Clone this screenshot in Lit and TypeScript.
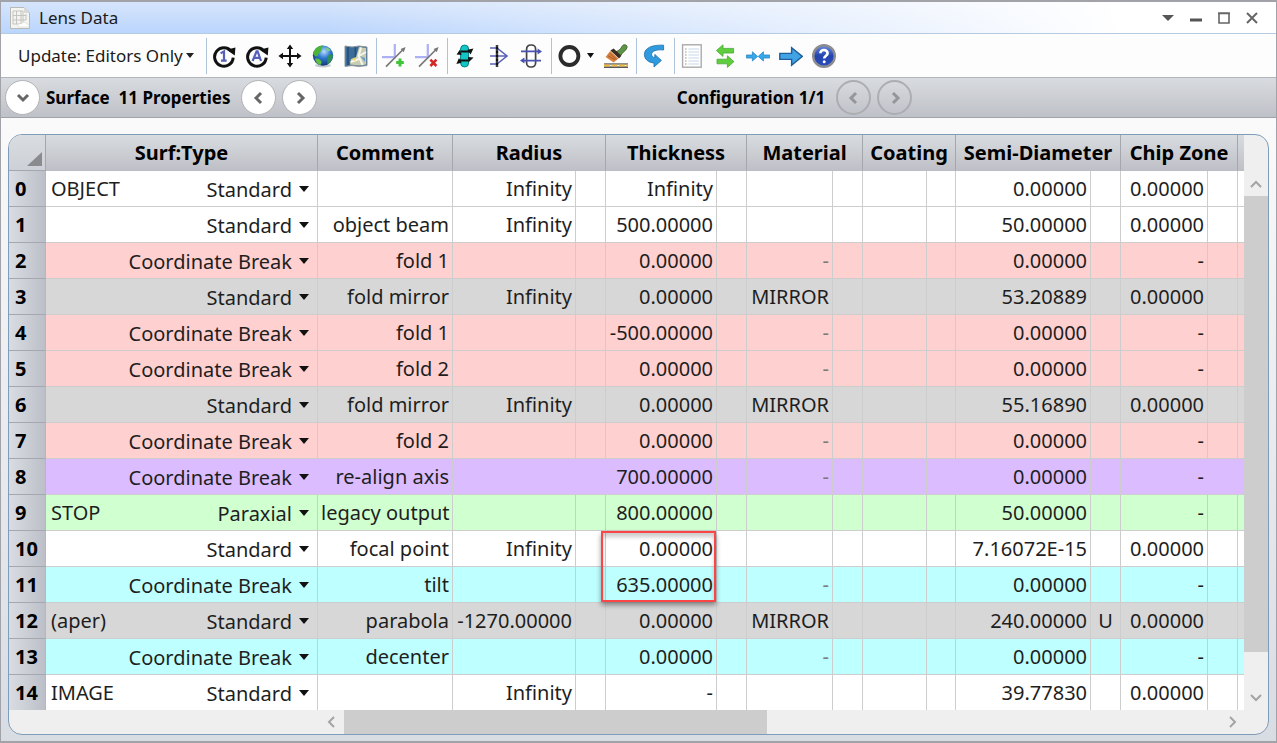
import { LitElement, html, svg, css, nothing } from "lit";
import { customElement, property } from "lit/decorators.js";

interface Row {
  tag?: string;
  type: string;
  comment?: string;
  radius?: string;
  thick: string;
  material?: string;
  semi: string;
  flag?: string;
  chip: string;
  tone?: string;
}

const Z = "0.00000";
const STD = "Standard";
const CB = "Coordinate Break";

const rows: Row[] = [
  { tag: "OBJECT", type: STD, radius: "Infinity", thick: "Infinity", semi: Z, chip: Z },
  { type: STD, comment: "object beam", radius: "Infinity", thick: "500.00000", semi: "50.00000", chip: Z },
  { type: CB, comment: "fold 1", thick: Z, material: "-", semi: Z, chip: "-", tone: "pink" },
  { type: STD, comment: "fold mirror", radius: "Infinity", thick: Z, material: "MIRROR", semi: "53.20889", chip: Z, tone: "gray" },
  { type: CB, comment: "fold 1", thick: "-500.00000", material: "-", semi: Z, chip: "-", tone: "pink" },
  { type: CB, comment: "fold 2", thick: Z, material: "-", semi: Z, chip: "-", tone: "pink" },
  { type: STD, comment: "fold mirror", radius: "Infinity", thick: Z, material: "MIRROR", semi: "55.16890", chip: Z, tone: "gray" },
  { type: CB, comment: "fold 2", thick: Z, material: "-", semi: Z, chip: "-", tone: "pink" },
  { type: CB, comment: "re-align axis", thick: "700.00000", material: "-", semi: Z, chip: "-", tone: "purple" },
  { tag: "STOP", type: "Paraxial", comment: "legacy output", thick: "800.00000", semi: "50.00000", chip: "-", tone: "green" },
  { type: STD, comment: "focal point", radius: "Infinity", thick: Z, semi: "7.16072E-15", chip: Z },
  { type: CB, comment: "tilt", thick: "635.00000", material: "-", semi: Z, chip: "-", tone: "cyan" },
  { tag: "(aper)", type: STD, comment: "parabola", radius: "-1270.00000", thick: Z, material: "MIRROR", semi: "240.00000", flag: "U", chip: Z, tone: "gray" },
  { type: CB, comment: "decenter", thick: Z, material: "-", semi: Z, chip: "-", tone: "cyan" },
  { tag: "IMAGE", type: STD, radius: "Infinity", thick: "-", semi: "39.77830", chip: Z },
];

const refreshArc = svg`
  <path d="M19.4 7.4A9.3 9.3 0 1 0 21.2 13.6" fill="none" stroke="#111" stroke-width="3"/>
  <path d="M14.6 5.8 23.4 3.4 22.8 11.4Z" fill="#111"/>`;

const icons: Record<string, unknown> = {
  updateOne: svg`${refreshArc}
    <path d="M8.6 9.4 12 7.4V16.4M9 16.6H14.6" fill="none" stroke="#5560b8" stroke-width="2.2"/>`,
  updateAll: svg`${refreshArc}
    <path d="M7.6 17 11.6 7.4H12.6L16 17M9.2 13.8H14.8" fill="none" stroke="#5560b8" stroke-width="2.2"/>`,
  move: svg`
    <path d="M12 3V21M3 12H21" stroke="#111" stroke-width="2"/>
    <path d="M12 .4 15.2 5H8.8ZM12 23.6 15.2 19H8.8ZM.4 12 5 8.8V15.2ZM23.6 12 19 8.8V15.2Z" fill="#111"/>`,
  globe: svg`
    <defs><radialGradient id="sea" cx=".55" cy=".3" r=".8">
      <stop offset="0" stop-color="#b9dcff"/><stop offset=".4" stop-color="#2f7ad0"/><stop offset="1" stop-color="#0b2460"/>
    </radialGradient></defs>
    <ellipse cx="12" cy="21.6" rx="8" ry="1.8" fill="#9aa" opacity=".6"/>
    <circle cx="12" cy="11.6" r="10.2" fill="url(#sea)"/>
    <path d="M2.2 9C4 4 8 1.6 11.6 1.6 12 3 10 5 10 7 9 9 7 9 6.6 12 5 13 3 12 2.2 9Z" fill="#4db43a"/>
    <path d="M17 12C18 10 21 10 22 11.6 22 15 19 19.6 16.4 20.4 17 17 15.4 15 17 12Z" fill="#2f8f58"/>
    <path d="M4 14.6C7 13.8 10 15.6 10.6 18 10.6 20 9.6 20.8 8.6 21 6 19.8 4.4 17.6 4 14.6Z" fill="#5ec040"/>
    <path d="M14.6 3.4C17 3.6 18.6 5 19.6 6.6L16.4 7.4Z" fill="#7fd07a"/>`,
  map: svg`
    <path d="M1 2 8 3 15 2 23 3V21.6L15 22.4 8 21.6 1 22.4Z" fill="#3b6d98" stroke="#8d9499"/>
    <path d="M4 3V21M11.4 3.4V21" stroke="#264f78" stroke-width="1.6"/>
    <path d="M7 15 12 13 15 3 22 4V20.6L15 21.6 6 20.6Z" fill="#c9ccae"/>
    <path d="M17 3.4 14.6 12 18.6 21M15 12 22 8M6.6 18 15 15" stroke="#f5f6f0" stroke-width="2" fill="none"/>
    <path d="M16 12 21 14V18Z" fill="#6aa0c8"/><path d="M8 15 12 14 11 17Z" fill="#f0d84c"/>`,
  axesAdd: svg`
    <path d="M12.8 0V13.2H0" fill="none" stroke="#aeb0f4" stroke-width="2.2"/>
    <path d="M4 22.6 21.6 5" stroke="#777" stroke-width="1.6"/><path d="M23.6 3 21.8 8.2 18.6 5Z" fill="#777"/>
    <path d="M18 14.6V22.4M14.2 18.5H21.8" stroke="#3fc43a" stroke-width="3"/>`,
  axesRemove: svg`
    <path d="M12.8 0V13.2H0" fill="none" stroke="#aeb0f4" stroke-width="2.2"/>
    <path d="M4 22.6 21.6 5" stroke="#777" stroke-width="1.6"/><path d="M23.6 3 21.8 8.2 18.6 5Z" fill="#777"/>
    <path d="M15.4 15.6 21.4 22M21.4 15.6 15.4 22" stroke="#d32828" stroke-width="2.6"/>`,
  lens: svg`
    <rect x="7.6" y="1" width="8" height="22" rx="4" fill="#12c6c6" stroke="#0a7d80"/>
    <path d="M8 7.6H18M5.6 16.4H15" stroke="#111" stroke-width="2"/>
    <path d="M3.6 10.4 7 5.6 8.6 11ZM20.6 13.6 15.4 18.4 15 13ZM14.4 5.8 20.4 4.6 17.6 10.4ZM8.6 18.8 3.4 20 6 14Z" fill="#111"/>`,
  focus: svg`
    <path d="M4 4H11L21 12 11 20H4M4 12H21" fill="none" stroke="#5a62b8" stroke-width="1.6"/>
    <path d="M11 1V23" stroke="#111" stroke-width="2.4"/><path d="M11 1V23" stroke="#778" stroke-width=".8" stroke-dasharray="2 2"/>`,
  collimate: svg`
    <rect x="7.6" y="1" width="9" height="22" rx="4" fill="none" stroke="#444" stroke-width="1.7"/>
    <path d="M2 7.4H20M4 16.6H22" stroke="#4852b4" stroke-width="1.8"/>
    <path d="M18.6 4.4 23 7.4 18.6 10.4ZM5.4 13.6 1 16.6 5.4 19.6Z" fill="#4852b4"/>`,
  ring: svg`<circle cx="12.4" cy="12" r="9" fill="none" stroke="#2b2b2b" stroke-width="3.8"/>`,
  brush: svg`
    <path d="M12 7.6C14 7 16.6 5.4 18 2.4 19.4-.4 23.6.6 23 3.4 22.4 6.4 18.6 8 16.6 11.6Z" fill="#5f9448" stroke="#3f6b34"/>
    <path d="M6.4 6.4 9.6 4.4 17.4 11.8 15 14.4Z" fill="#3c2c24"/>
    <path d="M6.2 7 14.4 14.6 9.6 18.6 1.6 13Z" fill="#d9813c"/><path d="M4 11.8 10.6 15.6M6 9.4 12.6 16" stroke="#a85a2c"/>
    <path d="M0 20H24M0 23.2H24" stroke="#222" stroke-width="1.2"/><path d="M0 21.6H24" stroke="#edb93c" stroke-width="2" stroke-dasharray="6 1.4"/>`,
  undo: svg`
    <path d="M21.6 1.2V6C15 5.2 9.4 7 9.6 10.4 9.8 12.4 11 13.4 12.8 13.6V10.4L19.4 16.4 12 23V19C6 18.4 2.4 15 2.4 10.4 2.4 4 10 .6 21.6 1.2Z" fill="#2f9ade" stroke="#1a6ea8" stroke-width=".8"/>`,
  sheet: svg`
    <rect x="2.6" y=".8" width="18.6" height="22.4" fill="#fff" stroke="#aaa" stroke-width="1.4"/>
    <path d="M8.4 5H19M8.4 8H19M8.4 11H19M8.4 14H19M8.4 17H19M8.4 20H19" stroke="#c6d7e8" stroke-width="1.1"/>
    <path d="M5 5H6.6M5 8H6.6M5 11H6.6M5 14H6.6M5 17H6.6M5 20H6.6" stroke="#999" stroke-width="1.1"/>`,
  swap: svg`
    <path d="M3.4 6.6 10 .8V4.4H20.6V9H10V12.4Z" fill="#5fce3e" stroke="#4aa834" stroke-width=".8"/>
    <path d="M21 17.6 14.4 11.8V15.2H4V19.8H14.4V23.4Z" fill="#5fce3e" stroke="#4aa834" stroke-width=".8"/>`,
  converge: svg`
    <path d="M11.6 12.4 6.4 7.8V11H.4V14H6.4V17ZM12.2 12.4 17.4 7.8V11H23.6V14H17.4V17Z" fill="#38a8ec" stroke="#2a86c4" stroke-width=".8"/>`,
  right: svg`<path d="M.8 9.4H12.6V3.6L23.4 12.4 12.6 21.2V15.4H.8Z" fill="#41a2e4" stroke="#1d5f9c" stroke-width="1.4"/>`,
  help: svg`
    <defs><linearGradient id="ball" x1="0" y1="0" x2="0" y2="1"><stop offset="0" stop-color="#6a8de0"/><stop offset=".5" stop-color="#2443ac"/><stop offset="1" stop-color="#2c4fc0"/></linearGradient></defs>
    <circle cx="12" cy="12" r="10.8" fill="url(#ball)" stroke="#8b8b90" stroke-width="2.4"/>
    <path d="M8.4 9.2C8.4 4.8 15.8 5 15.6 9.4 15.5 11.8 12.2 11.8 12.2 14.6" fill="none" stroke="#fff" stroke-width="2.6"/><circle cx="12.2" cy="17.8" r="1.5" fill="#fff"/>`,
};

const chevrons: Record<string, string> = {
  down: "M3 5 8 10 13 5",
  up: "M3 11 8 6 13 11",
  left: "M10 3 5 8 10 13",
  right: "M6 3 11 8 6 13",
};

@customElement("app-icon")
export class AppIcon extends LitElement {
  @property() name = "";
  static styles = css`
    :host { display: block; width: 24px; height: 24px; }
    svg { display: block; width: 24px; height: 24px; }
  `;
  render() {
    return html`<svg viewBox="0 0 24 24" aria-hidden="true">${icons[this.name]}</svg>`;
  }
}

@customElement("app-chevron")
export class AppChevron extends LitElement {
  @property() dir = "down";
  @property({ type: Number }) weight = 3;
  static styles = css`
    :host { display: block; width: 16px; height: 16px; }
    svg { display: block; }
  `;
  render() {
    return html`<svg width="16" height="16" viewBox="0 0 16 16" aria-hidden="true">
      <path d=${chevrons[this.dir]} fill="none" stroke="currentColor" stroke-width=${this.weight} />
    </svg>`;
  }
}

@customElement("lens-grid")
export class LensGrid extends LitElement {
  static styles = css`
    :host {
      display: grid;
      grid-template-columns: minmax(0, 1fr) 24px;
      grid-template-rows: auto 24px;
      overflow: hidden;
      border: 1px solid #7f9db9;
      border-radius: 14px;
      background: #efefef;
      color: #1e1e1e;
      font-size: 20px;
    }
    .view { overflow: hidden; }
    table {
      width: 100%;
      table-layout: fixed;
      border-collapse: separate;
      border-spacing: 0;
      line-height: 35px;
      white-space: nowrap;
    }
    .c-num { width: 37px; }
    .c-type { width: 272px; }
    .c-comment { width: 135px; }
    .c-radius { width: 123px; }
    .c-solve { width: 30px; }
    .c-thick { width: 111px; }
    .c-mat { width: 86px; }
    .c-coat { width: 64px; }
    .c-coat-solve { width: 29px; }
    .c-semi { width: 135px; }
    .c-chip { width: 87px; }
    th, td {
      box-sizing: border-box;
      height: 36px;
      padding: 0 3px;
      border-right: 1px solid #cdcdcd;
      border-bottom: 1px solid #cdcdcd;
      text-align: right;
      vertical-align: middle;
    }
    th { color: #000; font-weight: 700; }
    thead th {
      padding: 0;
      border-right-color: #a4a8ae;
      border-bottom-color: #bcbdc4;
      background: linear-gradient(#d8dcdf, #bfc0c7);
      text-align: center;
    }
    tbody th {
      padding: 0 0 0 6px;
      border-right-color: #b4b7be;
      border-bottom-color: #a4a8ae;
      background: linear-gradient(90deg, #d9dde3, #bcbfc7);
      text-align: left;
    }
    thead .corner {
      padding: 0 3px 4px 0;
      border-bottom-color: #a4a8ae;
      background: linear-gradient(#d9dde1, #cdd0d6);
      text-align: right;
      vertical-align: bottom;
    }
    .corner svg { display: block; margin-left: auto; }
    th:last-child, td:last-child { border-right: 0; }
    tbody tr:last-child > * { height: 35px; border-bottom: 0; }
    td { background: var(--tone, #fff); }
    .pink { --tone: #ffd0d0; }
    .gray { --tone: #d7d7d7; }
    .purple { --tone: #dbbcff; }
    .green { --tone: #d0ffd0; }
    .cyan { --tone: #beffff; }
    .dim { color: #7a7a7a; }
    .flag { text-align: center; }
    .surface { display: flex; align-items: center; padding-left: 2px; }
    .pick { display: flex; flex: 1; align-items: center; }
    select {
      box-sizing: border-box;
      flex: 1;
      min-width: 0;
      height: 34px;
      margin: 0;
      padding: 0 0 2px;
      border: 0;
      outline: 0;
      appearance: none;
      background: transparent;
      color: inherit;
      font: inherit;
      text-align: right;
      text-align-last: right;
    }
    .caret { flex: none; margin: 0 5px 0 7px; }
    .marked { position: relative; }
    .mark {
      position: absolute;
      z-index: 1;
      top: 0;
      right: 0;
      left: -5px;
      height: 67px;
      border: 2px solid #fa4646;
      box-shadow: 0 3px 5px #0006, inset 0 4px 4px #0003;
      pointer-events: none;
    }
    .bar { display: flex; align-items: center; }
    .bar button {
      display: grid;
      place-items: center;
      width: 24px;
      height: 24px;
      padding: 0;
      border: 0;
      background: transparent;
      color: #a4a4a4;
    }
    .vbar { flex-direction: column; padding-top: 37px; }
    .vtrack { display: flex; flex: 1; flex-direction: column; align-self: stretch; }
    .htrack { display: flex; flex: 1; align-self: stretch; }
    .vthumb { flex: 455; background: #cdcdcd; }
    .vrest { flex: 34; }
    .hthumb { flex: 423; background: #cdcdcd; }
    .hrest { flex: 452; }
    .hbar { padding-left: 311px; }
  `;

  row(r: Row, i: number) {
    return html`<tr class=${r.tone ?? "plain"}>
      <th scope="row">${i}</th>
      <td>
        <div class="surface">
          <span>${r.tag ?? nothing}</span>
          <label class="pick">
            <select aria-label="Surface ${i} type"><option>${r.type}</option></select>
            <svg class="caret" width="10" height="6" viewBox="0 0 10 6" aria-hidden="true"><path d="M0 0H10L5 6Z" fill="#111" /></svg>
          </label>
        </div>
      </td>
      <td>${r.comment}</td>
      <td>${r.radius}</td>
      <td></td>
      <td class=${i === 10 ? "marked" : "value"}>${r.thick}${i === 10 ? html`<div class="mark"></div>` : nothing}</td>
      <td></td>
      <td class=${r.material === "-" ? "dim" : "value"}>${r.material}</td>
      <td></td>
      <td></td>
      <td></td>
      <td>${r.semi}</td>
      <td class="flag">${r.flag}</td>
      <td>${r.chip}</td>
      <td></td>
      <td></td>
    </tr>`;
  }

  render() {
    return html`
      <div class="view">
        <table>
          <colgroup>
            <col class="c-num" /><col class="c-type" /><col class="c-comment" />
            <col class="c-radius" /><col class="c-solve" />
            <col class="c-thick" /><col class="c-solve" />
            <col class="c-mat" /><col class="c-solve" />
            <col class="c-coat" /><col class="c-coat-solve" />
            <col class="c-semi" /><col class="c-solve" />
            <col class="c-chip" /><col class="c-solve" />
            <col />
          </colgroup>
          <thead>
            <tr>
              <th class="corner" aria-label="Select all">
                <svg width="15" height="14" viewBox="0 0 15 14" aria-hidden="true"><path d="M15 0V14H0Z" fill="#8a8b8e" /></svg>
              </th>
              <th scope="col">Surf:Type</th>
              <th scope="col">Comment</th>
              <th scope="col" colspan="2">Radius</th>
              <th scope="col" colspan="2">Thickness</th>
              <th scope="col" colspan="2">Material</th>
              <th scope="col" colspan="2">Coating</th>
              <th scope="col" colspan="2">Semi-Diameter</th>
              <th scope="col" colspan="2">Chip Zone</th>
              <th></th>
            </tr>
          </thead>
          <tbody>${rows.map((r, i) => this.row(r, i))}</tbody>
        </table>
      </div>
      <div class="bar vbar">
        <button aria-label="Scroll up"><app-chevron dir="up" weight="2"></app-chevron></button>
        <div class="vtrack"><div class="vthumb"></div><div class="vrest"></div></div>
        <button aria-label="Scroll down"><app-chevron dir="down" weight="2"></app-chevron></button>
      </div>
      <div class="bar hbar">
        <button aria-label="Scroll left"><app-chevron dir="left" weight="2"></app-chevron></button>
        <div class="htrack"><div class="hthumb"></div><div class="hrest"></div></div>
        <button aria-label="Scroll right"><app-chevron dir="right" weight="2"></app-chevron></button>
      </div>
      <div></div>
    `;
  }
}

@customElement("app-root")
export class AppRoot extends LitElement {
  static styles = css`
    :host {
      display: flex;
      flex-direction: column;
      box-sizing: border-box;
      min-height: 100vh;
      border: 1px solid #a2a3a8;
      border-top-width: 2px;
      border-bottom-width: 2px;
      background: linear-gradient(#fafafa 120px, #d8dce3);
      color: #1a1a1a;
      font-family: "Noto Sans", "Open Sans", sans-serif;
      font-size: 17px;
    }
    button { padding: 0; border: 0; background: transparent; color: inherit; font: inherit; }
    .title {
      display: flex;
      align-items: center;
      height: 31px;
      padding: 0 10px 0 8px;
      border-bottom: 1px solid #b4cbe2;
      background: linear-gradient(90deg, #fff0 25%, #fff 88%), linear-gradient(#d6e5fb, #bad5fd);
    }
    .title h1 { flex: 1; margin: 0 0 0 8px; font-size: 17px; font-weight: 400; line-height: 24px; }
    .win { display: grid; place-items: center; width: 28px; height: 24px; }
    .tools { display: flex; align-items: center; height: 43px; padding-left: 17px; background: #fdfdfd; }
    .update { display: flex; align-items: center; margin-right: 12px; }
    .update select {
      width: 168px;
      padding: 0;
      border: 0;
      appearance: none;
      background: transparent;
      color: inherit;
      font: 17px "Noto Sans", "Open Sans", sans-serif;
    }
    .group {
      display: flex;
      align-items: center;
      gap: 9px;
      height: 36px;
      padding: 0 8px 0 5px;
      border-left: 1px solid #aec3da;
    }
    .aperture { display: flex; align-items: center; gap: 6px; margin-right: 1px; }
    .props {
      display: flex;
      align-items: center;
      height: 39px;
      border-top: 1px solid #b2b5ba;
      border-bottom: 1px solid #9fa2a8;
      background: linear-gradient(#d8dbdf, #bfc1c8);
      color: #000;
      font-weight: 700;
      white-space: pre;
    }
    .side { display: flex; box-sizing: border-box; width: 53%; align-items: center; gap: 3px; padding-left: 1px; }
    .config { display: flex; align-items: center; gap: 3px; }
    .round {
      display: grid;
      place-items: center;
      box-sizing: border-box;
      width: 35px;
      height: 35px;
      margin: 0 3px;
      border: 1px solid #b0b2b6;
      border-radius: 50%;
      background: #fff;
      color: #666;
    }
    .round:disabled { border: 2px solid #abadb1; background: transparent; color: #94969a; }
    .pair { display: flex; margin-left: 5px; }
    lens-grid { margin: 16px 7px 5px; }
  `;

  tool(name: string, label: string) {
    return html`<button aria-label=${label}><app-icon name=${name}></app-icon></button>`;
  }

  render() {
    return html`
      <header class="title">
        <svg width="22" height="24" viewBox="0 0 22 24" aria-hidden="true">
          <path d="M1.5 1.5H15L20.5 7V22.5H1.5Z" fill="#f4f4f2" stroke="#b9b9b6" />
          <path d="M4 5H14V18H4ZM4 9.5H17M4 14H17M7.5 5V18M12 5V18M17 8V14" fill="none" stroke="#c4c4c0" />
          <path d="M15 1.5V7H20.5Z" fill="#dadad6" />
          <path d="M9 21C8 18 11 17 12.6 18 13 15.6 17 15.6 17.6 18 21 18 20.6 21 18.6 21Z" fill="#fff" stroke="#d5d5d2" stroke-width=".6" />
        </svg>
        <h1>Lens Data</h1>
        <button class="win" aria-label="Options"><svg width="12" height="6"><path d="M0 0H12L6 6Z" fill="#555" /></svg></button>
        <button class="win" aria-label="Minimize"><svg width="12" height="12"><path d="M0 8H12" stroke="#555" stroke-width="3" /></svg></button>
        <button class="win" aria-label="Maximize"><svg width="12" height="12"><path d="M1 1H11V11H1ZM0 1.5H12" fill="none" stroke="#666" stroke-width="1.6" /></svg></button>
        <button class="win" aria-label="Close"><svg width="12" height="12"><path d="M1 1 11 11M11 1 1 11" stroke="#666" stroke-width="2" /></svg></button>
      </header>
      <nav class="tools" aria-label="Editor tools">
        <label class="update">
          <select aria-label="Update mode"><option>Update: Editors Only</option></select>
          <svg width="8" height="5" aria-hidden="true"><path d="M0 0H8L4 5Z" fill="#222" /></svg>
        </label>
        <div class="group">
          ${this.tool("updateOne", "Update")}${this.tool("updateAll", "Update all")}${this.tool("move", "Move")}
          ${this.tool("globe", "Global")}${this.tool("map", "Map")}
        </div>
        <div class="group">${this.tool("axesAdd", "Add break")}${this.tool("axesRemove", "Remove break")}</div>
        <div class="group">${this.tool("lens", "Reverse")}${this.tool("focus", "Focus")}${this.tool("collimate", "Afocal")}</div>
        <div class="group">
          <button class="aperture" aria-label="Aperture">
            <app-icon name="ring"></app-icon>
            <svg width="7" height="5" aria-hidden="true"><path d="M0 0H7L3.5 5Z" fill="#111" /></svg>
          </button>
          ${this.tool("brush", "Coat")}
        </div>
        <div class="group">${this.tool("undo", "Undo")}</div>
        <div class="group">
          ${this.tool("sheet", "Sheet")}${this.tool("swap", "Swap")}${this.tool("converge", "Fit")}
          ${this.tool("right", "Go to")}${this.tool("help", "Help")}
        </div>
      </nav>
      <section class="props">
        <div class="side">
          <button class="round" aria-label="Expand"><app-chevron dir="down"></app-chevron></button>
          <span>Surface  11 Properties</span>
          <div class="pair">
            <button class="round" aria-label="Previous surface"><app-chevron dir="left"></app-chevron></button>
            <button class="round" aria-label="Next surface"><app-chevron dir="right"></app-chevron></button>
          </div>
        </div>
        <div class="config">
          <span>Configuration 1/1</span>
          <div class="pair">
            <button class="round" disabled aria-label="Previous configuration"><app-chevron dir="left"></app-chevron></button>
            <button class="round" disabled aria-label="Next configuration"><app-chevron dir="right"></app-chevron></button>
          </div>
        </div>
      </section>
      <lens-grid></lens-grid>
    `;
  }
}
